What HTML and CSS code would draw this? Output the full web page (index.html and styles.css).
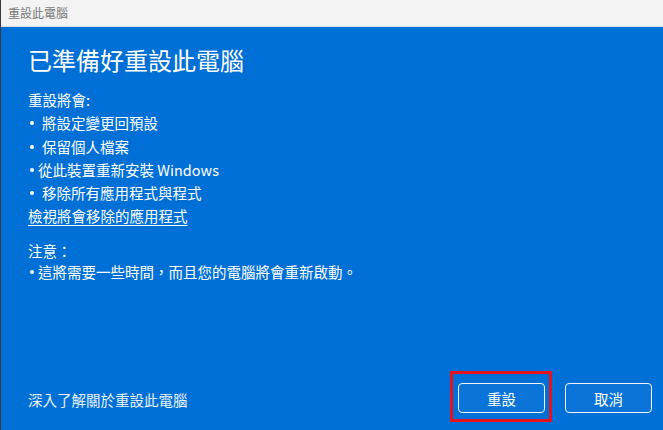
FILE: index.html
```html
<!DOCTYPE html>
<html lang="zh-Hant">
<head>
    <meta charset="UTF-8" />
    <title>重設此電腦</title>
    <link rel="stylesheet" href="styles.css">
</head>
<body>
    <div class="window">
        <div class="titlebar">重設此電腦</div>
        <div class="content">
            <h1>已準備好重設此電腦</h1>
            <div class="section">
                <div class="line">重設將會:</div>
                <div class="line"><span class="dot"></span><span class="indent">將設定變更回預設</span></div>
                <div class="line"><span class="dot"></span><span class="indent">保留個人檔案</span></div>
                <div class="line"><span class="dot"></span><span class="tight">從此裝置重新安裝 Windows</span></div>
                <div class="line"><span class="dot"></span><span class="indent">移除所有應用程式與程式</span></div>
                <a class="line link" href="#">檢視將會移除的應用程式</a>
            </div>
            <div class="section note">
                <div class="line">注意：</div>
                <div class="line"><span class="dot"></span><span class="tight">這將需要一些時間，而且您的電腦將會重新啟動。</span></div>
            </div>
            <div class="footer">
                <a class="more" href="#">深入了解關於重設此電腦</a>
                <div class="buttons">
                    <span class="highlight"><button class="btn">重設</button></span>
                    <button class="btn">取消</button>
                </div>
            </div>
        </div>
    </div>
</body>
</html>
```

FILE: styles.css
```css
html, body {
    margin: 0;
    padding: 0;
}
body {
    width: 663px;
    height: 430px;
    overflow: hidden;
    font-family: "Noto Sans CJK TC", "Noto Sans", sans-serif;
    background-color: #0170d6;
}
.window {
    height: 430px;
    display: flex;
    flex-direction: column;
    border-left: 1px solid #3a3a3a;
    box-sizing: border-box;
}
.titlebar {
    height: 26px;
    line-height: 26px;
    padding-left: 7px;
    font-size: 12px;
    color: #7a7a7a;
    background-color: #f3f3f3;
    border-bottom: 1px solid #d6dde4;
}
.content {
    flex: 1;
    display: flex;
    flex-direction: column;
    padding: 0 0 0 27px;
    color: #fff;
    background-color: #0170d6;
}
h1 {
    margin: 17px 0 0;
    font-size: 24px;
    font-weight: 400;
    line-height: 32px;
}
.section {
    display: flex;
    flex-direction: column;
    margin-top: 12px;
    font-size: 14.5px;
}
.line {
    display: flex;
    align-items: center;
    line-height: 23.3px;
    white-space: nowrap;
}
.dot {
    flex: none;
    width: 4px;
    height: 4px;
    margin: 1px 4px 0 2px;
    border-radius: 50%;
    background-color: #fff;
}
.indent {
    padding-left: 4px;
}
.tight {
    padding-left: 0;
}
.link {
    display: block;
    color: #fff;
    text-decoration: underline;
    text-underline-offset: 3px;
    align-self: flex-start;
}
.note {
    margin-top: 12px;
}
.note .line {
    line-height: 21px;
}
.footer {
    margin-top: auto;
    display: flex;
    align-items: center;
    justify-content: space-between;
    padding: 0 11px 8px 0;
}
.more {
    font-size: 14.5px;
    color: #e8f1fb;
    text-decoration: none;
    margin-top: 6px;
}
.buttons {
    display: flex;
    align-items: center;
    gap: 13px;
}
.highlight {
    display: flex;
    padding: 9px 4px 6px 5px;
    border: 3px solid #e5121f;
}
.btn {
    width: 87px;
    height: 30px;
    font-family: "Noto Sans CJK TC", "Noto Sans", sans-serif;
    font-size: 14.5px;
    color: #fff;
    background-color: #0a74d8;
    border: 1.5px solid #f2f6fb;
    border-radius: 4px;
    cursor: pointer;
}
.buttons > .btn {
    margin-top: 3px;
}
```
